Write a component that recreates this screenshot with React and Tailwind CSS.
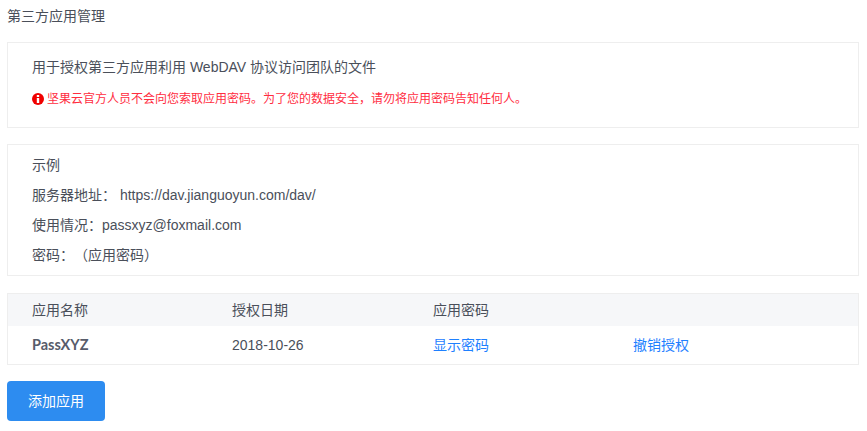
import React from 'react';

const font = "font-['Liberation_Sans','Noto_Sans_CJK_SC',sans-serif]";

const App = () => {
  return (
    <div className={`${font} w-[867px] h-[431px] bg-white px-[7px] text-[14px] text-[#4a4f5a] overflow-hidden`}>
      <h1 className="h-[42px] pt-[6px] leading-[20px] font-normal">第三方应用管理</h1>

      <div className="h-[86px] w-[852px] border border-[#eeeeee] pl-[24px] pt-[14px]">
        <p className="leading-[20px]">用于授权第三方应用利用 WebDAV 协议访问团队的文件</p>
        <p className="mt-[12px] flex items-center gap-[3px] leading-[20px] text-[12px] text-[#ff2d3f]">
          <svg width="12" height="12" viewBox="0 0 12 12" className="shrink-0">
            <circle cx="6" cy="6" r="6" fill="#f00000" />
            <rect x="4.8" y="2" width="2.4" height="2" fill="#fff" />
            <rect x="4.8" y="5" width="2.4" height="5" fill="#fff" />
          </svg>
          <span>坚果云官方人员不会向您索取应用密码。为了您的数据安全，请勿将应用密码告知任何人。</span>
        </p>
      </div>

      <div className="mt-[16px] h-[132px] w-[852px] border border-[#eeeeee] pl-[24px] pt-[10px]">
        <div className="flex flex-col gap-[10px] leading-[20px]">
          <p>示例</p>
          <p>服务器地址： https://dav.jianguoyun.com/dav/</p>
          <p>使用情况：passxyz@foxmail.com</p>
          <p className="[text-spacing-trim:space-all]">密码：（应用密码）</p>
        </div>
      </div>

      <div className="mt-[17px] h-[72px] w-[852px] border border-[#eeeeee]">
        <div className="grid h-[32px] grid-cols-[200px_201px_200px_1fr] items-center bg-[#f6f7f9] pl-[24px]">
          <span>应用名称</span>
          <span>授权日期</span>
          <span>应用密码</span>
          <span></span>
        </div>
        <div className="grid h-[38px] grid-cols-[200px_201px_200px_1fr] items-center pl-[24px]">
          <span className="font-['Lato',sans-serif] text-[14.5px] font-bold text-[#575c6b]">PassXYZ</span>
          <span>2018-10-26</span>
          <a className="text-[#1e80ff]">显示密码</a>
          <a className="text-[#1e80ff]">撤销授权</a>
        </div>
      </div>

      <button className="mt-[16px] h-[40px] w-[98px] rounded-[4px] bg-[#2d8cf0] text-white">添加应用</button>
    </div>
  );
};

export default App;
